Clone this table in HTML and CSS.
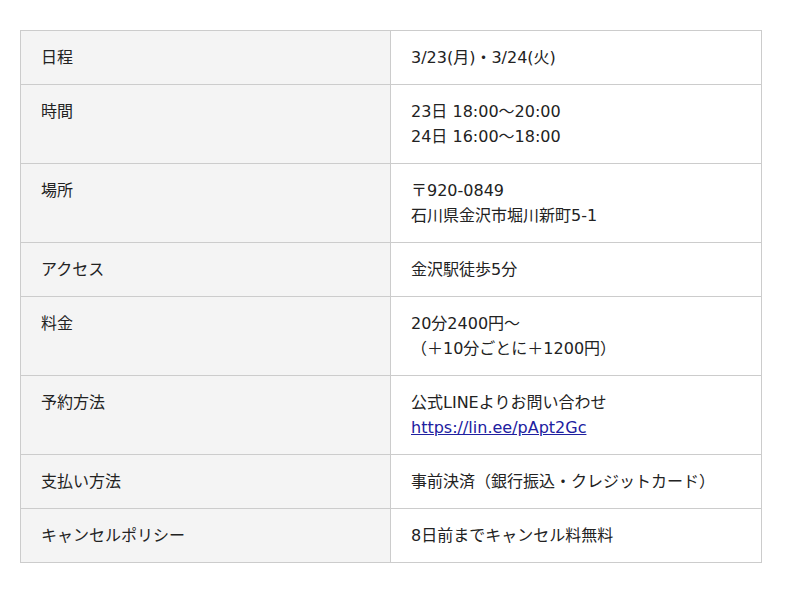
FILE: index.html
```html
<!DOCTYPE html>
<html lang="ja">
<head>
<meta charset="utf-8">
<link rel="stylesheet" href="styles.css">
</head>
<body>
<table class="info">
  <tr><th>日程</th><td>3/23(月)・3/24(火)</td></tr>
  <tr><th>時間</th><td>23日 18:00〜20:00<br>24日 16:00〜18:00</td></tr>
  <tr><th>場所</th><td>〒920-0849<br>石川県金沢市堀川新町5-1</td></tr>
  <tr><th>アクセス</th><td>金沢駅徒歩5分</td></tr>
  <tr><th>料金</th><td>20分2400円〜<br>（＋10分ごとに＋1200円）</td></tr>
  <tr><th>予約方法</th><td>公式LINEよりお問い合わせ<br><a class="link" href="#">https://lin.ee/pApt2Gc</a></td></tr>
  <tr><th>支払い方法</th><td>事前決済（銀行振込・クレジットカード）</td></tr>
  <tr><th>キャンセルポリシー</th><td>8日前までキャンセル料無料</td></tr>
</table>
</body>
</html>
```
FILE: styles.css
```css
html, body {
  margin: 0;
  padding: 0;
  background: #fff;
}
body {
  padding: 30px 20px;
  font-family: "DejaVu Sans", "Noto Sans CJK JP", sans-serif;
  font-size: 16px;
  color: #222;
}
.info {
  width: 742px;
  border-collapse: collapse;
  table-layout: fixed;
}
.info th, .info td {
  border: 1px solid #cccccc;
  padding: 14px 20px;
  line-height: 25px;
  text-align: left;
  vertical-align: top;
  font-weight: normal;
}
.info th {
  width: 329px;
  background: #f4f4f4;
}
.link {
  color: #2020a0;
  text-decoration: underline;
}
```
